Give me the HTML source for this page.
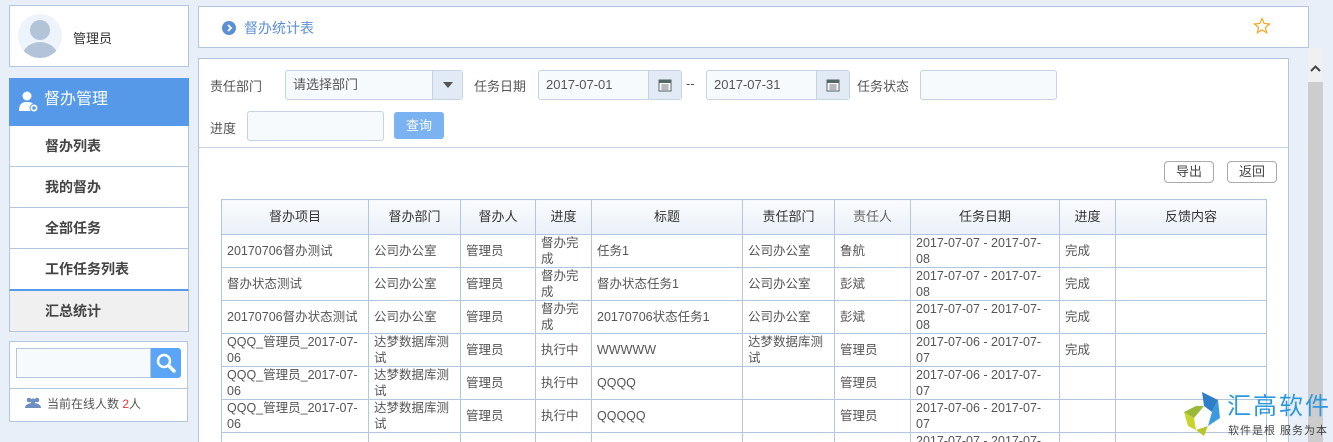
<!DOCTYPE html>
<html><head><meta charset="utf-8"><style>
*{box-sizing:border-box;margin:0;padding:0}
html,body{width:1333px;height:442px;overflow:hidden}
body{background:#e8eff9;font-family:"Liberation Sans","Noto Sans CJK SC",sans-serif;color:#555;position:relative}
.abs{position:absolute}
.box{background:#fff;border:1px solid #b4c6de}
.mi{position:absolute;left:9px;width:180px;height:41px;background:#fff;border:1px solid #b4c6de;border-top:none;font-size:14px;font-weight:bold;color:#444;padding-left:35px;line-height:40px}
table{border-collapse:collapse;font-size:13px;color:#555;table-layout:fixed}
td,th{border:1px solid #b4c6de;padding:0 5px;line-height:16px;vertical-align:middle;text-align:left;word-break:normal;overflow-wrap:break-word}
td{font-size:12.5px}
th{height:35px;text-align:center;font-weight:normal;font-size:13px;color:#333;background:linear-gradient(#fafcfe,#eaf0f7)}
td{height:33px}
.inp{position:absolute;height:30px;border:1px solid #c5d3e4;border-radius:3px;background:#f7fafd;font-size:13px;color:#555;line-height:28px;padding-left:7px}
.lbl{position:absolute;font-size:13px;color:#555}
.cal{position:absolute;top:0;right:0;width:33px;height:28px;background:#e1eaf5;border-left:1px solid #c5d3e4}
.btn{position:absolute;height:22px;border:1px solid #aaa;border-radius:4px;background:#fff;font-size:13px;line-height:20px;text-align:center;color:#444}
</style></head><body>
<div class="abs box" style="left:9px;top:5px;width:180px;height:62px">
 <div class="abs" style="left:8px;top:8px;width:44px;height:44px;border-radius:50%;background:#eef4fb;overflow:hidden">
  <div class="abs" style="left:12px;top:6px;width:20px;height:20px;border-radius:50%;background:#b3c4d9"></div>
  <div class="abs" style="left:2px;top:28px;width:40px;height:22px;border-radius:20px 20px 0 0;background:#b3c4d9"></div>
 </div>
 <div class="abs" style="left:63px;top:22px;font-size:13px;color:#333">管理员</div>
</div>
<div class="abs" style="left:9px;top:78px;width:180px;height:48px;background:#5599e8;color:#fff;font-size:16px;line-height:44px;padding-left:35px">督办管理
 <svg class="abs" style="left:10px;top:13px" width="20" height="22" viewBox="0 0 20 22"><circle cx="8" cy="5" r="4.5" fill="#fff"/><path d="M0 20 C0 12 4 11 8 11 C12 11 15 12 15 16 L15 20Z" fill="#fff"/><circle cx="15" cy="17" r="4" fill="#fff" stroke="#5599e8" stroke-width="1"/><circle cx="15" cy="17" r="1.8" fill="#5599e8"/></svg>
</div>
<div class="mi" style="top:126px">督办列表</div>
<div class="mi" style="top:167px">我的督办</div>
<div class="mi" style="top:208px">全部任务</div>
<div class="mi" style="top:249px;border-bottom:2px solid #5599e8;height:42px">工作任务列表</div>
<div class="mi" style="top:291px;background:#f0f0f0;height:41px">汇总统计</div>
<div class="abs box" style="left:9px;top:341px;width:179px;height:81px">
 <div class="abs" style="left:6px;top:6px;width:135px;height:30px;border:1px solid #b4c6de;background:#f7fafd"></div>
 <div class="abs" style="left:141px;top:6px;width:30px;height:30px;background:#5aa5f5;border-radius:0 3px 3px 0">
  <svg width="30" height="30" viewBox="0 0 30 30"><circle cx="13" cy="13" r="6" fill="none" stroke="#fff" stroke-width="2.5"/><path d="M17.5 17.5 L23 23" stroke="#fff" stroke-width="3.5" stroke-linecap="round"/></svg>
 </div>
 <div class="abs" style="left:0;top:46px;width:177px;border-top:1px solid #b4c6de"></div>
 <svg class="abs" style="left:15px;top:55px" width="16" height="12" viewBox="0 0 16 12"><circle cx="4" cy="3" r="2.3" fill="#6d8fc0"/><circle cx="12" cy="3" r="2.3" fill="#6d8fc0"/><circle cx="8" cy="4" r="2.6" fill="#6d8fc0"/><path d="M0 11 C0 6 8 6 8 6 C8 6 16 6 16 11Z" fill="#6d8fc0"/></svg>
 <div class="abs" style="left:37px;top:53px;font-size:12px;color:#555">当前在线人数 <span style="color:#e33">2</span>人</div>
</div>
<div class="abs box" style="left:198px;top:6px;width:1111px;height:42px">
 <div class="abs" style="left:23px;top:14px;width:14px;height:14px;border-radius:50%;background:#5b8fd4"></div>
 <svg class="abs" style="left:23px;top:14px" width="14" height="14"><path d="M6 4 L9 7 L6 10" fill="none" stroke="#fff" stroke-width="1.8"/></svg>
 <div class="abs" style="left:45px;top:11px;font-size:14px;color:#5b8fd4">督办统计表</div>
 <svg class="abs" style="left:1054px;top:10px" width="18" height="18" viewBox="0 0 24 24"><path d="M12 2 L14.9 8.6 L22 9.3 L16.6 14 L18.2 21 L12 17.3 L5.8 21 L7.4 14 L2 9.3 L9.1 8.6Z" fill="none" stroke="#f5a623" stroke-width="1.6"/></svg>
</div>
<div class="abs box" style="left:198px;top:58px;width:1091px;height:384px;overflow:hidden;border-bottom:none">
 <div class="lbl" style="left:11px;top:17px">责任部门</div>
 <div class="inp" style="left:86px;top:11px;width:178px">请选择部门<div class="cal" style="width:30px"><div class="abs" style="left:10px;top:11px;border:5px solid transparent;border-top:6px solid #555;border-bottom:none"></div></div></div>
 <div class="lbl" style="left:275px;top:17px">任务日期</div>
 <div class="inp" style="left:339px;top:11px;width:144px">2017-07-01<div class="cal"><svg style="margin:7px 0 0 9px" width="14" height="14"><rect x="1" y="2" width="12" height="11" fill="#fff" stroke="#566" stroke-width="1"/><rect x="1" y="2" width="12" height="3" fill="#566"/><path d="M3 7h8M3 9h8M3 11h8M5 6v7M7 6v7M9 6v7" stroke="#889" stroke-width=".7"/></svg></div></div>
 <div class="lbl" style="left:487px;top:17px">--</div>
 <div class="inp" style="left:507px;top:11px;width:144px">2017-07-31<div class="cal"><svg style="margin:7px 0 0 9px" width="14" height="14"><rect x="1" y="2" width="12" height="11" fill="#fff" stroke="#566" stroke-width="1"/><rect x="1" y="2" width="12" height="3" fill="#566"/><path d="M3 7h8M3 9h8M3 11h8M5 6v7M7 6v7M9 6v7" stroke="#889" stroke-width=".7"/></svg></div></div>
 <div class="lbl" style="left:658px;top:17px">任务状态</div>
 <div class="inp" style="left:721px;top:11px;width:137px"></div>
 <div class="lbl" style="left:11px;top:59px">进度</div>
 <div class="inp" style="left:48px;top:52px;width:137px"></div>
 <div class="abs" style="left:195px;top:53px;width:50px;height:27px;background:#7bb2f2;border-radius:3px;color:#fff;font-size:13px;line-height:27px;text-align:center">查询</div>
 <div class="abs" style="left:0;top:88px;width:1089px;border-top:1px solid #c5d3e4"></div>
 <div class="btn" style="left:965px;top:102px;width:50px">导出</div>
 <div class="btn" style="left:1028px;top:102px;width:50px">返回</div>
 <table class="abs" style="left:22px;top:140px;width:1045px">
  <colgroup><col style="width:147px"><col style="width:92px"><col style="width:75px"><col style="width:56px"><col style="width:151px"><col style="width:92px"><col style="width:76px"><col style="width:149px"><col style="width:56px"><col style="width:151px"></colgroup>
  <tr><th>督办项目</th><th>督办部门</th><th>督办人</th><th>进度</th><th>标题</th><th>责任部门</th><th style="color:#666">责任人</th><th>任务日期</th><th>进度</th><th>反馈内容</th></tr>
  <tr><td>20170706督办测试</td><td>公司办公室</td><td>管理员</td><td>督办完成</td><td>任务1</td><td>公司办公室</td><td>鲁航</td><td>2017-07-07 - 2017-07-<br>08</td><td>完成</td><td></td></tr>
  <tr><td>督办状态测试</td><td>公司办公室</td><td>管理员</td><td>督办完成</td><td>督办状态任务1</td><td>公司办公室</td><td>彭斌</td><td>2017-07-07 - 2017-07-<br>08</td><td>完成</td><td></td></tr>
  <tr><td>20170706督办状态测试</td><td>公司办公室</td><td>管理员</td><td>督办完成</td><td>20170706状态任务1</td><td>公司办公室</td><td>彭斌</td><td>2017-07-07 - 2017-07-<br>08</td><td>完成</td><td></td></tr>
  <tr><td>QQQ_管理员_2017-07-<br>06</td><td>达梦数据库测试</td><td>管理员</td><td>执行中</td><td>WWWWW</td><td>达梦数据库测试</td><td>管理员</td><td>2017-07-06 - 2017-07-<br>07</td><td>完成</td><td></td></tr>
  <tr><td>QQQ_管理员_2017-07-<br>06</td><td>达梦数据库测试</td><td>管理员</td><td>执行中</td><td>QQQQ</td><td></td><td>管理员</td><td>2017-07-06 - 2017-07-<br>07</td><td></td><td></td></tr>
  <tr><td>QQQ_管理员_2017-07-<br>06</td><td>达梦数据库测试</td><td>管理员</td><td>执行中</td><td>QQQQQ</td><td></td><td>管理员</td><td>2017-07-06 - 2017-07-<br>07</td><td></td><td></td></tr>
  <tr><td></td><td></td><td></td><td></td><td></td><td></td><td></td><td>2017-07-07 - 2017-07-<br>08</td><td></td><td></td></tr>
 </table>
</div>
<div class="abs" style="left:1308px;top:48px;width:15px;height:394px;background:#cdcdcd"></div>
<div class="abs" style="left:1308px;top:48px;width:15px;height:34px;background:#f0f0f0"><svg width="15" height="34"><path d="M3 23 L7.5 18.5 L12 23" fill="none" stroke="#444" stroke-width="2"/></svg></div>
<svg class="abs" style="left:1182px;top:390px" width="52" height="48" viewBox="0 0 52 48"><path d="M20 2 L36 10 L30 22 L22 16Z" fill="#2f7fc8"/><path d="M36 10 L38 28 L26 36 L30 22Z" fill="#3a9ae0"/><path d="M2 22 L14 16 L22 16 L12 28Z" fill="#9ab83a"/><path d="M2 22 L12 28 L14 40 L6 36Z" fill="#c8d42c"/><path d="M14 40 L26 36 L22 46Z" fill="#b7c52a"/></svg>
<div class="abs" style="left:1227px;top:393px;font-size:24px;color:#2e98dc;letter-spacing:2px;line-height:28px;white-space:nowrap">汇高软件</div>
<div class="abs" style="left:1228px;top:422px;font-size:11px;color:#444;letter-spacing:1px;white-space:nowrap">软件是根 服务为本</div>
</body></html>
